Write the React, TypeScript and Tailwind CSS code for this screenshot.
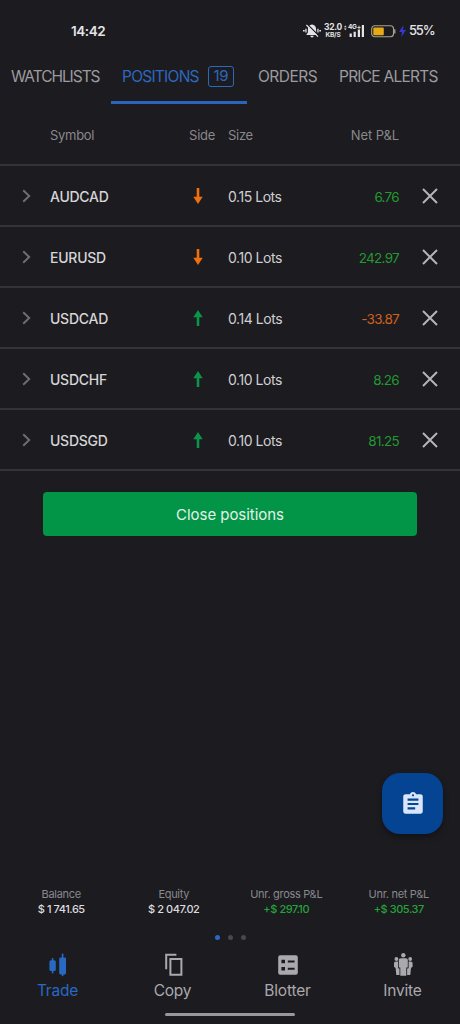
import clsx from 'clsx';

const tabs = [
  { label: 'WATCHLISTS', className: 'w-[111px] pl-[11px] tracking-[-1.05px]' },
  { label: 'POSITIONS', className: 'w-[136px] pl-[11px] tracking-[-0.75px]', count: 19 },
  { label: 'ORDERS', className: 'w-[81px] pl-[11px] tracking-[-0.5px]' },
  { label: 'PRICE ALERTS', className: 'w-[132px] pl-[11px] tracking-[-0.75px]' },
];

const positions = [
  { symbol: 'AUDCAD', side: 'sell', size: '0.15 Lots', pnl: '6.76' },
  { symbol: 'EURUSD', side: 'sell', size: '0.10 Lots', pnl: '242.97' },
  { symbol: 'USDCAD', side: 'buy', size: '0.14 Lots', pnl: '-33.87' },
  { symbol: 'USDCHF', side: 'buy', size: '0.10 Lots', pnl: '8.26' },
  { symbol: 'USDSGD', side: 'buy', size: '0.10 Lots', pnl: '81.25' },
];

const stats = [
  { label: 'Balance', value: '$ 1 741.65' },
  { label: 'Equity', value: '$ 2 047.02' },
  { label: 'Unr. gross P&L', value: '+$ 297.10', gain: true },
  { label: 'Unr. net P&L', value: '+$ 305.37', gain: true },
];

const rowGrid = 'grid grid-cols-[50px_128px_50px_92px_79px_61px] items-center';

function StatusBar() {
  return (
    <div className="flex h-[52px] items-center pt-[10px] pl-[71px] text-[#e4e4e6]">
      <span className="w-[232px] text-[13.5px] font-semibold tracking-[-0.45px]">14:42</span>
      {/* Muted bell */}
      <svg className="h-4 w-[18px]" viewBox="0 0 18 16" fill="currentColor">
        <path d="M9 1.6c-2.8.5-4.1 2.2-4.1 4.8v3.1L3.2 12h11.6l-1.7-2.5V6.4c0-2.6-1.3-4.3-4.1-4.8z" />
        <path d="M7.3 12.8h3.4a1.7 1.7 0 0 1-3.4 0z" />
        <path d="M0 6.9h1.7v1.5H0zM2.3 5.7h1.3v3.8H2.3zM16.3 6.9H18v1.5h-1.7zM14.3 5.7h1.3v3.8h-1.3z" />
        <path d="M4.4 1.4l11.4 11.4" stroke="#1c1b1f" strokeWidth="1.3" />
        <path d="M3.4 2l11.6 11.6" stroke="currentColor" strokeWidth="1.2" />
      </svg>
      <div className="ml-[2px] flex w-[20px] flex-col items-center font-bold">
        <span className="text-[8.5px] leading-[7.5px] tracking-[-0.3px]">32.0</span>
        <span className="text-[6.5px] leading-[6.5px] tracking-[-0.2px]">KB/S</span>
      </div>
      {/* Mobile signal */}
      <div className="relative h-3 w-[22px]">
        <span className="absolute -top-[1px] left-[5px] text-[6.5px] leading-[7px] font-bold tracking-[-0.3px]">4G+</span>
        <svg className="h-3 w-[22px]" viewBox="0 0 22 12" fill="currentColor">
          <path d="M1 2.2L2.3.4l1.3 1.8zM1 3.4h2.6L2.3 5.2zM6.6 8.5h2.2V12H6.6zM10.6 6.8h2.2V12h-2.2zM14.8 4.5H17V12h-2.2zM18.8 0H21v12h-2.2z" />
        </svg>
      </div>
      <svg className="ml-[6px] h-[13px] w-[25px]" viewBox="0 0 25 13" fill="none">
        <rect x="0.7" y="0.8" width="21.8" height="11" rx="3" stroke="#aaa48f" strokeWidth="1.1" />
        <rect x="2.3" y="2.4" width="10.5" height="7.9" rx="1" fill="#e5aa16" />
        <path d="M23.8 4.2v4.3" stroke="#aaa48f" strokeWidth="1.3" />
      </svg>
      <svg className="ml-[3px] h-3 w-[7px]" viewBox="0 0 7 12" fill="#3836d5">
        <path d="M4.5 0L0 7h3L2.3 12 7 5H4z" />
      </svg>
      <span className="ml-[3px] text-[13px] font-medium tracking-[-1.2px]">55%</span>
    </div>
  );
}

function SideArrow({ side }: { side: string }) {
  return (
    <svg
      className={clsx('mx-auto h-4 w-[10px]', side === 'sell' ? 'rotate-180 text-[#f0700f]' : 'text-[#0c944a]')}
      viewBox="0 0 10 16"
      fill="currentColor"
    >
      <path d="M5 0l4.7 7.2H6.3V16H3.7V7.2H.3z" />
    </svg>
  );
}

function TradeIcon() {
  return (
    <svg className="h-6 w-6" viewBox="0 0 24 24" fill="currentColor">
      <rect x="3.4" y="7.2" width="6.4" height="10.8" rx="1.5" />
      <rect x="5.8" y="5" width="1.6" height="15.4" rx="0.6" />
      <rect x="13.2" y="4.4" width="6.8" height="17" rx="1.3" />
      <rect x="15.8" y="0.6" width="1.6" height="22.6" rx="0.6" />
    </svg>
  );
}

function CopyIcon() {
  return (
    <svg className="h-6 w-6" viewBox="0 0 24 24" fill="none" stroke="currentColor" strokeWidth="2">
      <path d="M15.4 1.7H5.2v14.5" />
      <path d="M9.4 6h11v15.8h-11z" />
    </svg>
  );
}

function BlotterIcon() {
  return (
    <svg className="h-6 w-6" viewBox="0 0 24 24" fill="currentColor">
      <path
        fillRule="evenodd"
        d="M4.2 2.2h15.6a2 2 0 0 1 2 2v15.6a2 2 0 0 1-2 2H4.2a2 2 0 0 1-2-2V4.2a2 2 0 0 1 2-2zM5.4 6.7v3.6H9V6.7zm6.4.8v2h6.8v-2zM5.4 14v3.6H9V14zm6.4.8v2h6.8v-2z"
      />
    </svg>
  );
}

function InviteIcon() {
  return (
    <svg className="h-6 w-6" viewBox="0 0 24 24" fill="currentColor">
      <circle cx="12.3" cy="2.3" r="2.2" />
      <circle cx="5.4" cy="6" r="1.9" />
      <circle cx="19.2" cy="6" r="1.9" />
      <path d="M9.8 5.2h5c1.3 0 2 .8 2 2v7.3h-1.5v8.3h-6v-8.3H7.8V7.2c0-1.2.7-2 2-2z" />
      <path d="M5 8.4h2v6.9l1.5.3v6.3H5.3l-.7-7L3 13.8v-3.2c0-1.3.7-2.2 2-2.2zM19.6 8.4h-2v6.9l-1.5.3v6.3h3.2l.7-7 1.6-1.1v-3.2c0-1.3-.7-2.2-2-2.2z" />
    </svg>
  );
}

const navItems = [
  { label: 'Trade', icon: TradeIcon, active: true },
  { label: 'Copy', icon: CopyIcon },
  { label: 'Blotter', icon: BlotterIcon },
  { label: 'Invite', icon: InviteIcon },
];

export default function App() {
  return (
    <div className="relative flex h-[1024px] w-[460px] flex-col overflow-hidden bg-[#1c1b1f] font-['Inter',sans-serif]">
      <StatusBar />

      {/* Tabs */}
      <nav className="flex h-[52px] shrink-0">
        {tabs.map((tab) => (
          <div
            key={tab.label}
            className={clsx(
              'flex items-center border-b-[3px] text-[15.5px] whitespace-nowrap',
              tab.className,
              tab.count ? 'border-[#2b64bd] text-[#2d68bf]' : 'border-transparent text-[#9c9b9f]',
            )}
          >
            {tab.label}
            {tab.count && (
              <span className="ml-[9px] flex h-[21px] w-[26px] items-center justify-center rounded-[3px] border border-[#2d68bf] text-[15px] tracking-[-0.5px]">
                {tab.count}
              </span>
            )}
          </div>
        ))}
      </nav>

      {/* Positions table */}
      <div className={clsx(rowGrid, 'h-[62px] shrink-0 border-b-2 border-[#343438] pt-[3px] text-[13px] text-[#89888c]')}>
        <span className="col-start-2 tracking-[-0.3px]">Symbol</span>
        <span className="pl-[11px] tracking-[-0.2px]">Side</span>
        <span className="tracking-[-0.3px]">Size</span>
        <span className="text-right tracking-[-0.1px]">Net P&amp;L</span>
      </div>
      {positions.map((position) => (
        <div key={position.symbol} className={clsx(rowGrid, 'h-[61px] shrink-0 border-b-2 border-[#343438] text-sm')}>
          <svg className="ml-[22px] h-[14px] w-[9px] text-[#6e6d72]" viewBox="0 0 9 14" fill="none" stroke="currentColor" strokeWidth="2">
            <path d="M1.2 1.2L7.2 7l-6 5.8" />
          </svg>
          <span className="pt-[3px] font-medium tracking-[-0.25px] text-[#d6d5d8]">{position.symbol}</span>
          <div className="pr-[10px]">
            <SideArrow side={position.side} />
          </div>
          <span className="pt-[3px] tracking-[-0.45px] text-[#d0cfd3]">{position.size}</span>
          <span
            className={clsx(
              'pt-1 text-right text-[13.5px] tracking-[-0.7px]',
              position.pnl.startsWith('-') ? 'text-[#d2611d]' : 'text-[#229a31]',
            )}
          >
            {position.pnl}
          </span>
          <svg className="ml-[23px] h-4 w-4 text-[#b5b4b8]" viewBox="0 0 16 16" fill="none" stroke="currentColor" strokeWidth="2">
            <path d="M1 1l14 14M15 1L1 15" />
          </svg>
        </div>
      ))}

      <button className="mx-[43px] mt-[21px] h-11 shrink-0 rounded-[4px] bg-[#029447] pt-[2px] text-[15px] tracking-[-0.05px] text-[#e4f2e8]">
        Close positions
      </button>

      <button className="absolute top-[773px] left-[382px] flex size-[61px] items-center justify-center rounded-[18px] bg-[#044492] text-[#d9e5fb] shadow-[0_3px_6px_rgba(0,0,0,0.35)]">
        <svg className="h-[26px] w-[26px]" viewBox="0 0 24 24" fill="currentColor">
          <path d="M19 3h-4.18C14.4 1.84 13.3 1 12 1c-1.3 0-2.4.84-2.82 2H5c-1.1 0-2 .9-2 2v14c0 1.1.9 2 2 2h14c1.1 0 2-.9 2-2V5c0-1.1-.9-2-2-2zm-7 0c.55 0 1 .45 1 1s-.45 1-1 1-1-.45-1-1 .45-1 1-1zm2 14H7v-2h7v2zm3-4H7v-2h10v2zm0-4H7V7h10v2z" />
        </svg>
      </button>

      {/* Account summary */}
      <footer className="mt-auto">
        <div className="grid grid-cols-4 px-[5px] text-center">
          {stats.map((stat) => (
            <div key={stat.label} className="flex flex-col">
              <span className="text-[11px] leading-[15px] tracking-[-0.3px] text-[#89888c]">{stat.label}</span>
              <span
                className={clsx(
                  'text-[11px] leading-[15px] font-medium tracking-[-0.45px]',
                  stat.gain ? 'text-[#24a33a]' : 'text-[#dcdbdf]',
                )}
              >
                {stat.value}
              </span>
            </div>
          ))}
        </div>
        <div className="mt-[18px] flex justify-center gap-2">
          <span className="size-[5px] rounded-full bg-[#2d68bf]" />
          <span className="size-[5px] rounded-full bg-[#48474c]" />
          <span className="size-[5px] rounded-full bg-[#48474c]" />
        </div>

        <nav className="mt-[13px] grid grid-cols-4">
          {navItems.map(({ label, icon: Icon, active }) => (
            <div key={label} className={clsx('flex flex-col items-center', active ? 'text-[#2869c4]' : 'text-[#aaa9ad]')}>
              <Icon />
              <span className="mt-[4px] text-[15.5px] leading-[20px] tracking-[-0.2px]">{label}</span>
            </div>
          ))}
        </nav>
        <div className="mx-auto mt-[12px] mb-[8px] h-[3px] w-[130px] rounded-full bg-[#98979a]" />
      </footer>
    </div>
  );
}
